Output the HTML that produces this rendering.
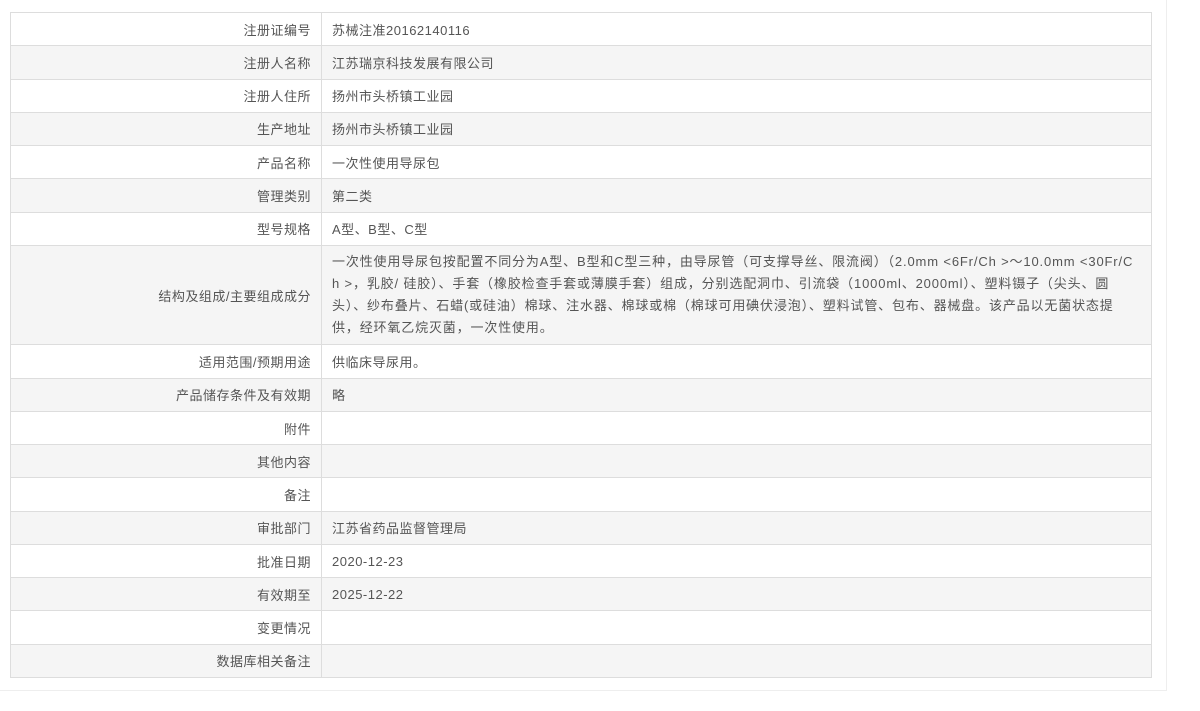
<!DOCTYPE html>
<html><head><meta charset="utf-8"><style>
body{margin:0;background:#fff;font-family:"Liberation Sans","Noto Sans CJK SC",sans-serif;font-size:13px;color:#555;letter-spacing:0.5px;}
.wrap{position:absolute;left:0;top:0;width:1166px;height:690px;border-right:1px solid #eee;border-bottom:1px solid #eee;}
table{position:absolute;left:10px;top:12px;width:1142px;border-collapse:collapse;table-layout:fixed;}
td{border:1px solid #ddd;height:32.27px;padding:0 10px;vertical-align:middle;white-space:nowrap;}
td.l{width:290px;text-align:right;}
tr:nth-child(even) td{background:#f5f5f5;}
td.big{height:98.5px;line-height:22px;letter-spacing:0.85px;}
</style></head><body>
<div class="wrap"></div>
<table>
<tr><td class="l">注册证编号</td><td>苏械注准20162140116</td></tr>
<tr><td class="l">注册人名称</td><td>江苏瑞京科技发展有限公司</td></tr>
<tr><td class="l">注册人住所</td><td>扬州市头桥镇工业园</td></tr>
<tr><td class="l">生产地址</td><td>扬州市头桥镇工业园</td></tr>
<tr><td class="l">产品名称</td><td>一次性使用导尿包</td></tr>
<tr><td class="l">管理类别</td><td>第二类</td></tr>
<tr><td class="l">型号规格</td><td>A型、B型、C型</td></tr>
<tr><td class="l">结构及组成/主要组成成分</td><td class="big">一次性使用导尿包按配置不同分为A型、B型和C型三种，由导尿管（可支撑导丝、限流阀）（2.0mm &lt;6Fr/Ch &gt;～10.0mm &lt;30Fr/C<br>h &gt;，乳胶/ 硅胶）、手套（橡胶检查手套或薄膜手套）组成，分别选配洞巾、引流袋（1000ml、2000ml）、塑料镊子（尖头、圆<br>头）、纱布叠片、石蜡(或硅油）棉球、注水器、棉球或棉（棉球可用碘伏浸泡）、塑料试管、包布、器械盘。该产品以无菌状态提<br>供，经环氧乙烷灭菌，一次性使用。</td></tr>
<tr><td class="l">适用范围/预期用途</td><td>供临床导尿用。</td></tr>
<tr><td class="l">产品储存条件及有效期</td><td>略</td></tr>
<tr><td class="l">附件</td><td></td></tr>
<tr><td class="l">其他内容</td><td></td></tr>
<tr><td class="l">备注</td><td></td></tr>
<tr><td class="l">审批部门</td><td>江苏省药品监督管理局</td></tr>
<tr><td class="l">批准日期</td><td>2020-12-23</td></tr>
<tr><td class="l">有效期至</td><td>2025-12-22</td></tr>
<tr><td class="l">变更情况</td><td></td></tr>
<tr><td class="l">数据库相关备注</td><td></td></tr>
</table>
</body></html>
